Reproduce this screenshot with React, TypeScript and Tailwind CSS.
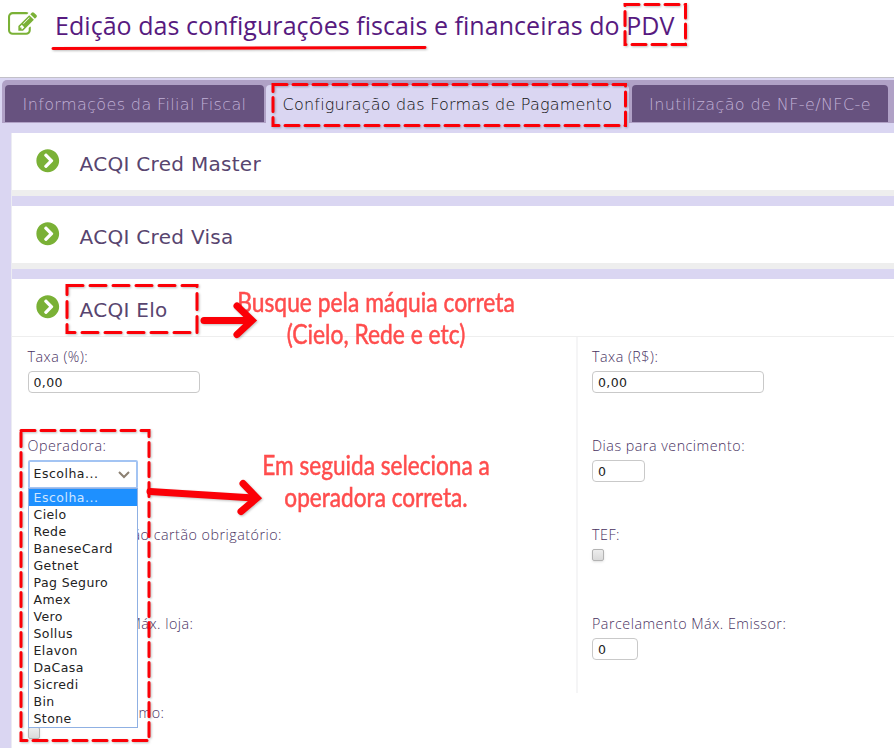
import type { ReactNode } from "react";
import { FaChevronCircleRight } from "react-icons/fa";

const operators = [
  "Escolha...", "Cielo", "Rede", "BaneseCard", "Getnet", "Pag Seguro", "Amex",
  "Vero", "Sollus", "Elavon", "DaCasa", "Sicredi", "Bin", "Stone",
];

function EditIcon() {
  return (
    <svg viewBox="0 0 1792 1792" className="h-[29px] w-[29px] shrink-0 fill-[#7ab136]">
      <path d="M888 1184l116-116-152-152-116 116v56h96v96h56zm440-720q-16-16-33 1l-350 350q-17 17-1 33t33-1l350-350q17-17 1-33zm80 594v190q0 119-84.5 203.5t-203.5 84.5h-832q-119 0-203.5-84.5t-84.5-203.5v-832q0-119 84.5-203.5t203.5-84.5h832q63 0 117 25 15 7 18 23 3 17-9 29l-49 49q-14 14-32 8-23-6-45-6h-832q-66 0-113 47t-47 113v832q0 66 47 113t113 47h832q66 0 113-47t47-113v-126q0-13 9-22l64-64q15-15 35-7t20 29zm-96-738l288 288-672 672h-288v-288zm444 132l-92 92-288-288 92-92q28-28 68-28t68 28l152 152q28 28 28 68t-28 68z" />
    </svg>
  );
}

function CardHeader({ title }: { title: string }) {
  return (
    <div className="flex h-[57px] items-center bg-white pl-[24px]">
      <FaChevronCircleRight className="-mt-px h-[23.5px] w-[23.5px] shrink-0 text-[#7ab136]" />
      <h2 className="ml-[20px] pt-[5px] text-[20px] leading-6 font-['DejaVu_Sans',Verdana,sans-serif] tracking-[0.3px] text-[#58456f]">{title}</h2>
    </div>
  );
}

function Field({ label, className = "", children }: { label: string; className?: string; children?: ReactNode }) {
  return (
    <div className="h-[89px]">
      <div className={`h-[25px] whitespace-nowrap text-[14.3px] font-light leading-[20px] tracking-[0.5px] text-[#48325f] ${className}`}>{label}</div>
      {children}
    </div>
  );
}

function NumberBox({ value, width }: { value: string; width: string }) {
  return (
    <div className={`${width} mt-[-1px] h-[22px] rounded-[4px] border border-[#c9c9c9] bg-white pl-[5px] text-[12.5px] leading-[21px] tracking-[0.4px] text-[#222] font-['DejaVu_Sans',Verdana,sans-serif]`}>
      {value}
    </div>
  );
}

function CheckBox() {
  return <div className="mt-[-1px] h-[12px] w-[12px] rounded-[2px] border border-[#b3b3b3] bg-linear-to-b from-[#ededed] to-[#dadada] shadow-sm" />;
}

function OperatorSelect() {
  return (
    <div className="relative z-10 w-[110px] font-['DejaVu_Sans',Verdana,sans-serif] text-[12.5px] tracking-[0.4px] text-[#222]">
      <div className="mt-[-1px] flex h-[29px] items-center justify-between rounded-[2px] border-2 border-[#a3c4f3] bg-white pr-[5px] pl-[4px] tracking-[0.5px]">
        Escolha...
        <svg viewBox="0 0 14 10" className="h-[10px] w-[14px]" fill="none" stroke="#8c8072" strokeWidth="2">
          <path d="M2 2l5 5 5-5" />
        </svg>
      </div>
      <ul className="absolute top-[28px] left-0 w-[110px] border border-[#8fb0e3] bg-white">
        {operators.map((name, i) => (
          <li key={name} className={i === 0 ? "h-[17px] bg-[#1e90ff] pl-[5px] leading-[18px] tracking-[0.5px] text-[#cfe6ff]" : "h-[17px] pl-[5px] leading-[18px]"}>
            {name}
          </li>
        ))}
      </ul>
    </div>
  );
}

function Annotations() {
  return (
    <svg viewBox="0 0 894 748" className="pointer-events-none absolute inset-0 z-30 h-[748px] w-[894px] drop-shadow-[1px_1px_1px_rgba(0,0,0,0.25)]" fill="none" stroke="#fb0007" strokeWidth="3" strokeLinecap="round">
      <path d="M53 48.500L425 47.500" />
      <g strokeDasharray="14 6">
        <path d="M625 4.500H685.500V44.500H625Z" />
        <path d="M273 84.500H625.500V125.500H273Z" />
        <path d="M67 285.500H197V332.500H67Z" strokeDasharray="16 7" />
        <path d="M21 430.500H149V740.500H21Z" />
      </g>
      <path d="M204 320.500H250" strokeWidth="7" />
      <path d="M237 306L252 320.500L237 334.500" strokeWidth="7" />
      <path d="M150 491.500L254 498" strokeWidth="7" />
      <path d="M243 483.500L257 498L241 511.500" strokeWidth="7" />
    </svg>
  );
}

export default function App() {
  return (
    <div className="relative flex h-[748px] w-[894px] flex-col overflow-hidden bg-[#dad6f2] font-['Open_Sans',sans-serif]">
      <header className="flex h-[78px] shrink-0 items-start border-b border-[#c2c0c8] bg-white pt-[10px] pl-[8px]">
        <EditIcon />
        <h1 className="-mt-[2px] ml-[18px] whitespace-nowrap text-[25px] leading-[34px] tracking-[0.05px] text-[#571a80]">
          Edição das configurações fiscais e financeiras do PDV
        </h1>
      </header>

      <nav className="mt-[2px] ml-[2px] flex h-[43px] shrink-0 items-end rounded-tl-[5px] bg-[#b0a1c6] pl-[3px] font-['DejaVu_Sans',Verdana,sans-serif] text-[16px] font-extralight whitespace-nowrap">
        <div className="mb-[1px] flex h-[37px] w-[259px] items-center justify-center rounded-t-[4px] bg-[#67527f] pt-[2px] tracking-[0.37px] text-[#c0b0d5]">Informações da Filial Fiscal</div>
        <div className="ml-[2px] flex h-[38px] w-[363px] items-center justify-center rounded-t-[4px] bg-[#dad6f2] pt-px tracking-[0.2px] text-[#111]">Configuração das Formas de Pagamento</div>
        <div className="mb-[1px] ml-[3px] flex h-[37px] w-[256px] items-center justify-center rounded-t-[4px] bg-[#67527f] pt-[2px] tracking-[0.4px] text-[#c0b0d5]">Inutilização de NF-e/NFC-e</div>
      </nav>

      <main className="mt-[10px] ml-[11px] flex flex-1 flex-col gap-[10px] border-l border-[#ececf2]">
        <section className="border-b-[6px] border-[#eee]"><CardHeader title="ACQI Cred Master" /></section>
        <section className="border-b-[6px] border-[#eee]"><CardHeader title="ACQI Cred Visa" /></section>
        <section className="flex flex-1 flex-col bg-white">
          <CardHeader title="ACQI Elo" />
          <div className="flex border-t border-[#eee]">
            <div className="w-[564px] shrink-0 pt-[10px] pl-[15.5px]">
              <Field label="Taxa (%):"><NumberBox value="0,00" width="w-[172px]" /></Field>
              <Field label="Operadora:"><OperatorSelect /></Field>
              <Field label="ão cartão obrigatório:" className="pl-[105px]" />
              <Field label="Máx. loja:" className="pl-[101px]" />
              <Field label="mo:" className="pl-[111px]"><CheckBox /></Field>
            </div>
            <div className="h-[356px] flex-1 border-l-2 border-[#f5f5f6] pt-[10px] pl-[14px]">
              <Field label="Taxa (R$):"><NumberBox value="0,00" width="w-[172px]" /></Field>
              <Field label="Dias para vencimento:"><NumberBox value="0" width="w-[53px]" /></Field>
              <Field label="TEF:"><CheckBox /></Field>
              <Field label="Parcelamento Máx. Emissor:"><NumberBox value="0" width="w-[46px]" /></Field>
            </div>
          </div>
        </section>
      </main>

      <p className="absolute top-[286px] left-[176px] z-20 w-[400px] scale-x-[0.878] text-center font-['Lato',sans-serif] text-[26px] leading-[32px] text-[#ff4d4d] [-webkit-text-stroke:0.5px_#ff4d4d]">
        Busque pela máquia correta<br />(Cielo, Rede e etc)
      </p>
      <p className="absolute top-[449px] left-[176px] z-20 w-[400px] scale-x-[0.87] text-center font-['Lato',sans-serif] text-[26px] leading-[32px] text-[#ff4d4d] [-webkit-text-stroke:0.5px_#ff4d4d]">
        Em seguida seleciona a<br />operadora correta.
      </p>
      <Annotations />
    </div>
  );
}
